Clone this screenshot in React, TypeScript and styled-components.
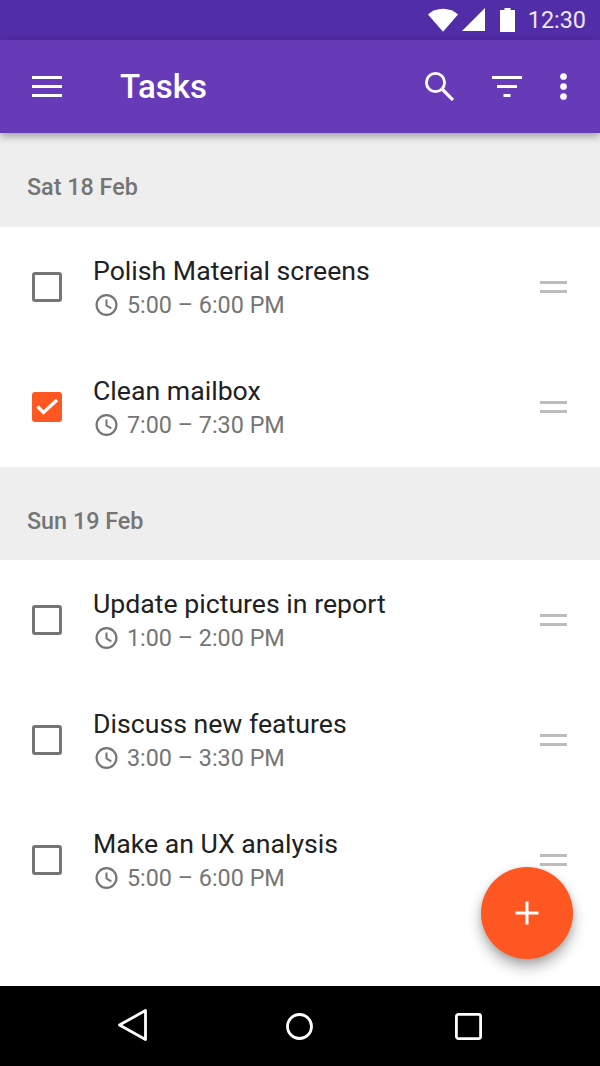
import styled, { createGlobalStyle } from "styled-components";

const GlobalStyle = createGlobalStyle`
  html, body { margin: 0; padding: 0; background: #fff; }
  body { font-family: Roboto, "Liberation Sans", sans-serif; }
`;

type Task = { title: string; time: string; done?: boolean };
type Section = { date: string; tasks: Task[] };

const sections: Section[] = [
  {
    date: "Sat 18 Feb",
    tasks: [
      { title: "Polish Material screens", time: "5:00 – 6:00 PM" },
      { title: "Clean mailbox", time: "7:00 – 7:30 PM", done: true },
    ],
  },
  {
    date: "Sun 19 Feb",
    tasks: [
      { title: "Update pictures in report", time: "1:00 – 2:00 PM" },
      { title: "Discuss new features", time: "3:00 – 3:30 PM" },
      { title: "Make an UX analysis", time: "5:00 – 6:00 PM" },
    ],
  },
];

export default function App() {
  return (
    <Screen>
      <GlobalStyle />
      <StatusBar>
        <svg width="30" height="24" viewBox="0 0 30 24">
          <path d="M0 6.500C4 3 9 .8 15 .8s11 2.200 15 5.700L15 23.700z" fill="#fff" />
        </svg>
        <SignalIcon width="23" height="24" viewBox="0 0 23 24">
          <path d="M0 23L23 0v23z" fill="#fff" />
        </SignalIcon>
        <BatteryIcon width="15" height="24" viewBox="0 0 15 24">
          <path d="M4.500 0h6v2H15v22H0V2h4.500z" fill="#fff" />
        </BatteryIcon>
        <Clock>12:30</Clock>
      </StatusBar>

      <AppBar>
        <IconSlot>
          <svg width="30" height="21" viewBox="0 0 30 21">
            <path d="M0 0h30v3H0zM0 9h30v3H0zM0 18h30v3H0z" fill="#fff" />
          </svg>
        </IconSlot>
        <Title>Tasks</Title>
        <Actions>
          <svg width="29" height="29" viewBox="0 0 29 29">
            <circle cx="10.500" cy="10.500" r="9.100" fill="none" stroke="#fff" strokeWidth="2.800" />
            <path d="M17 17l11 11" stroke="#fff" strokeWidth="3.200" />
          </svg>
          <svg width="30" height="21" viewBox="0 0 30 21">
            <path d="M0 0h30v3H0zM5 9h20v3H5zM11.500 18h7v3h-7z" fill="#fff" />
          </svg>
          <svg width="7" height="27" viewBox="0 0 7 27">
            <circle cx="3.500" cy="3.500" r="3.350" fill="#fff" />
            <circle cx="3.500" cy="13.500" r="3.350" fill="#fff" />
            <circle cx="3.500" cy="23.500" r="3.350" fill="#fff" />
          </svg>
        </Actions>
      </AppBar>

      <Content>
        {sections.map((section) => (
          <div key={section.date}>
            <SectionHeader>{section.date}</SectionHeader>
            {section.tasks.map((task) => (
              <Row key={task.title}>
                <CheckBox $checked={task.done}>
                  {task.done && (
                    <svg width="30" height="30" viewBox="0 0 30 30">
                      <path d="M5.500 14.500l6 6L25 8" fill="none" stroke="#fff" strokeWidth="3.400" />
                    </svg>
                  )}
                </CheckBox>
                <TaskText>
                  <TaskTitle>{task.title}</TaskTitle>
                  <TaskTime>
                    <svg width="25" height="24" viewBox="0 0 25 24">
                      <circle cx="13.500" cy="12" r="9.900" fill="none" stroke="#757575" strokeWidth="2.200" />
                      <path d="M13.500 6.500v6l4.800 2.900" fill="none" stroke="#757575" strokeWidth="2" />
                    </svg>
                    {task.time}
                  </TaskTime>
                </TaskText>
                <DragHandle />
              </Row>
            ))}
          </div>
        ))}
        <Fab aria-label="Add task">
          <svg width="24" height="24" viewBox="0 0 24 24">
            <path d="M.5 10.500h23v3H.5zM10.500.5h3v23h-3z" fill="#fff" />
          </svg>
        </Fab>
      </Content>

      <NavBar>
        <svg width="30" height="34" viewBox="0 0 30 34">
          <path d="M1.500 16L27.500 1.500v29z" fill="none" stroke="#fff" strokeWidth="2.800" strokeLinejoin="round" />
        </svg>
        <svg width="27" height="27" viewBox="0 0 27 27">
          <circle cx="13.500" cy="13.500" r="12" fill="none" stroke="#fff" strokeWidth="2.800" />
        </svg>
        <svg width="27" height="27" viewBox="0 0 27 27">
          <rect x="1.400" y="1.400" width="24.200" height="24.200" rx="2" fill="none" stroke="#fff" strokeWidth="2.800" />
        </svg>
      </NavBar>
    </Screen>
  );
}

const Screen = styled.div`
  width: 600px;
  height: 1066px;
  display: flex;
  flex-direction: column;
  overflow: hidden;
`;

const StatusBar = styled.div`
  height: 40px;
  flex: none;
  padding-right: 14px;
  display: flex;
  align-items: center;
  justify-content: flex-end;
  background: #512da8;
`;

const SignalIcon = styled.svg`
  margin-left: 4px;
`;

const BatteryIcon = styled.svg`
  margin: 0 13px 0 15px;
`;

const Clock = styled.span`
  font-size: 23.400px;
  color: #ede7f6;
`;

const AppBar = styled.header`
  height: 93.330px;
  flex: none;
  padding: 0 33.300px 0 32px;
  display: flex;
  align-items: center;
  background: #673ab7;
  box-shadow: 0 3px 8px rgba(0, 0, 0, 0.35);
  position: relative;
  z-index: 1;
  color: #fff;
`;

const IconSlot = styled.div`
  width: 88px;
  display: flex;
  align-items: center;
`;

const Title = styled.h1`
  margin: 0;
  flex: 1;
  font-size: 33px;
  font-weight: 500;
`;

const Actions = styled.div`
  display: flex;
  align-items: center;
  gap: 38px;
`;

const Content = styled.main`
  flex: 1;
  min-height: 0;
  position: relative;
  background: #fff;
`;

const SectionHeader = styled.div`
  height: 93.330px;
  box-sizing: border-box;
  padding: 14.500px 0 0 27px;
  display: flex;
  align-items: center;
  background: #eeeeee;
  color: #757575;
  font-size: 23.330px;
  font-weight: 500;
`;

const Row = styled.div`
  height: 120px;
  padding: 0 33px 0 32px;
  display: flex;
  align-items: center;
`;

const CheckBox = styled.div<{ $checked?: boolean }>`
  width: 30px;
  height: 30px;
  flex: none;
  box-sizing: border-box;
  margin-right: 31px;
  display: flex;
  align-items: center;
  justify-content: center;
  border-radius: 3px;
  border: ${(p) => (p.$checked ? "none" : "3px solid #757575")};
  background: ${(p) => (p.$checked ? "#ff5722" : "transparent")};
`;

const TaskText = styled.div`
  flex: 1;
  min-width: 0;
  padding-top: 3px;
  display: flex;
  flex-direction: column;
  gap: 2px;
`;

const TaskTitle = styled.div`
  font-size: 26.670px;
  line-height: 32px;
  color: #212121;
`;

const TaskTime = styled.div`
  display: flex;
  align-items: center;
  gap: 9px;
  font-size: 23.330px;
  line-height: 32px;
  color: #757575;
`;

const DragHandle = styled.div`
  width: 27px;
  height: 12px;
  flex: none;
  box-sizing: border-box;
  border-top: 3px solid #bdbdbd;
  border-bottom: 3px solid #bdbdbd;
`;

const Fab = styled.button`
  position: absolute;
  right: 27.300px;
  bottom: 27.500px;
  width: 92px;
  height: 92px;
  padding: 0;
  border: none;
  border-radius: 50%;
  display: flex;
  align-items: center;
  justify-content: center;
  background: #ff5722;
  box-shadow: 0 8px 14px rgba(0, 0, 0, 0.3), 0 2px 6px rgba(0, 0, 0, 0.12);
`;

const NavBar = styled.nav`
  height: 80px;
  flex: none;
  padding: 0 118.500px 0 117.500px;
  display: grid;
  grid-template-columns: 1fr auto 1fr;
  align-items: center;
  background: #000;

  & > :last-child {
    justify-self: end;
  }
`;
